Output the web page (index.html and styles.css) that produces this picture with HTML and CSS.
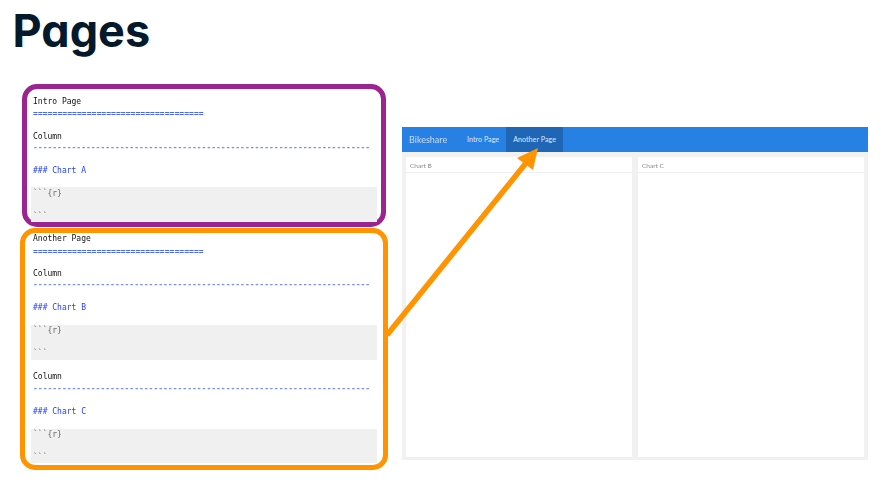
FILE: index.html
```html
<!DOCTYPE html>
<html lang="en">
<head>
<meta charset="utf-8">
<title>Pages</title>
<link rel="stylesheet" href="styles.css">
</head>
<body>
<main class="slide">
  <h1 class="title">Pages</h1>
  <div class="content">
    <div class="code-column">
      <section class="code-box purple">
        <div class="line">Intro Page</div>
        <div class="line heavy">===================================</div>
        <div class="line"></div>
        <div class="line">Column</div>
        <div class="line rule">----------------------------------------------------------------------</div>
        <div class="line"></div>
        <div class="line heading">### Chart A</div>
        <div class="line"></div>
        <div class="chunk">
          <div class="line">```{r}</div>
          <div class="line"></div>
          <div class="line">```</div>
        </div>
      </section>
      <section class="code-box orange">
        <div class="line">Another Page</div>
        <div class="line heavy">===================================</div>
        <div class="line"></div>
        <div class="line">Column</div>
        <div class="line rule">----------------------------------------------------------------------</div>
        <div class="line"></div>
        <div class="line heading">### Chart B</div>
        <div class="line"></div>
        <div class="chunk">
          <div class="line">```{r}</div>
          <div class="line"></div>
          <div class="line">```</div>
        </div>
        <div class="line"></div>
        <div class="line">Column</div>
        <div class="line rule">----------------------------------------------------------------------</div>
        <div class="line"></div>
        <div class="line heading">### Chart C</div>
        <div class="line"></div>
        <div class="chunk">
          <div class="line">```{r}</div>
          <div class="line"></div>
          <div class="line">```</div>
        </div>
      </section>
    </div>
    <section class="dashboard">
      <nav class="navbar">
        <span class="brand">Bikeshare</span>
        <span class="tab">Intro Page</span>
        <span class="tab active">Another Page</span>
      </nav>
      <div class="charts">
        <article class="card"><header class="card-title">Chart B</header></article>
        <article class="card"><header class="card-title">Chart C</header></article>
      </div>
    </section>
  </div>
  <svg class="arrow" width="892" height="494" viewBox="0 0 892 494" aria-hidden="true">
    <line x1="387" y1="335" x2="526" y2="163" stroke="#ff9400" stroke-width="5.5"/>
    <polygon points="538,148 533,170 517,158" fill="#ff9400"/>
  </svg>
</main>
</body>
</html>
```
FILE: styles.css
```css
* {
  box-sizing: border-box;
}

html,
body {
  margin: 0;
  padding: 0;
  background: #fff;
}

.slide {
  position: relative;
  width: 892px;
  height: 494px;
  overflow: hidden;
}

.title {
  margin: 0;
  height: 84px;
  padding: 2px 0 0 12.5px;
  font-family: Inter, "Liberation Sans", sans-serif;
  font-feature-settings: "cv11" 1;
  font-size: 45px;
  line-height: 58px;
  font-weight: 650;
  color: #05192d;
}

.content {
  display: flex;
  gap: 14px;
  padding-left: 20px;
}

.code-column {
  display: flex;
  flex-direction: column;
  align-items: center;
  gap: 1px;
  width: 368px;
}

.code-box {
  border-style: solid;
  border-width: 5px;
  border-radius: 15px;
  font-family: "DejaVu Sans Mono", "Liberation Mono", monospace;
  font-size: 8px;
  color: #111;
}

.purple {
  width: 364px;
  height: 143px;
  padding: 6px 4px 0;
  border-color: #9b2490;
}

.orange {
  width: 368px;
  height: 242px;
  padding: 0 6px;
  border-color: #ff9400;
}

.line {
  height: 11.5px;
  padding-left: 2px;
  white-space: pre;
  overflow: hidden;
  filter: blur(0.3px);
}

.purple .line {
  line-height: 13px;
}

.orange .line {
  line-height: 12.5px;
}

.rule {
  color: #7a8dff;
  font-weight: 700;
}

.purple .heavy,
.orange .heavy {
  line-height: 13px;
  color: #4a68ff;
  font-weight: 700;
  letter-spacing: 0.06px;
}

.heading {
  color: #2440ff;
}

.chunk {
  background: #f0f0f0;
  color: #666;
}

.dashboard {
  display: flex;
  flex-direction: column;
  width: 466px;
  height: 333px;
  margin-top: 43px;
  background: #f1f1f1;
}

.navbar {
  display: flex;
  align-items: stretch;
  height: 25px;
  background: #2780e3;
  font-family: Lato, "Open Sans", sans-serif;
  color: #dce9fa;
}

.brand {
  display: flex;
  align-items: center;
  width: 58px;
  padding-left: 7px;
  font-size: 9px;
  color: #c9def7;
  filter: blur(0.3px);
}

.tab {
  display: flex;
  align-items: center;
  padding: 0 7px;
  font-size: 7.2px;
}

.tab.active {
  background: #1f66b6;
}

.charts {
  display: flex;
  flex: 1;
  gap: 6px;
  padding: 5px 4px 3px;
}

.card {
  flex: 1;
  background: #fff;
}

.card-title {
  height: 16px;
  padding: 4px 0 0 4px;
  border-bottom: 1px solid #f0f0f0;
  font-family: Lato, "Open Sans", sans-serif;
  font-size: 6.5px;
  line-height: 9px;
  color: #888;
  filter: blur(0.2px);
}

.arrow {
  position: absolute;
  left: 0;
  top: 0;
  pointer-events: none;
}
```
